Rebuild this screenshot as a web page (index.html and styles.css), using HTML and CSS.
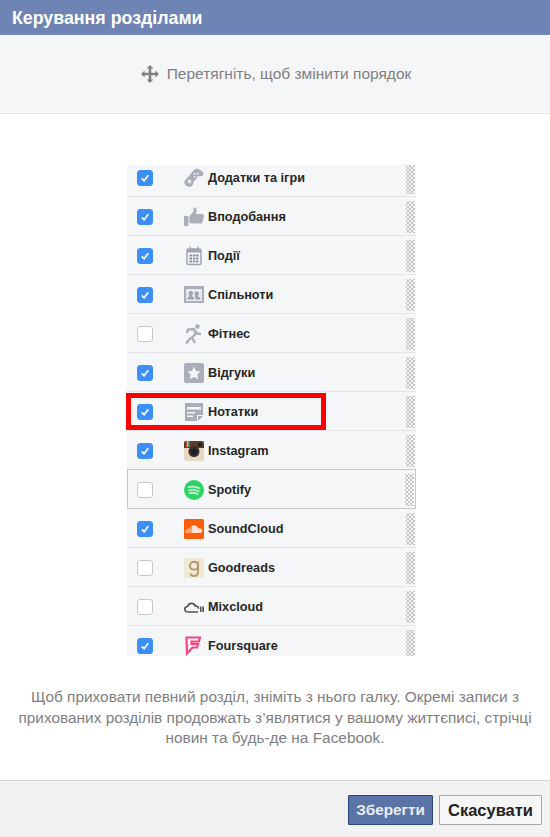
FILE: index.html
```html
<!DOCTYPE html>
<html lang="uk">
<head>
    <meta charset="UTF-8">
    <title>Керування розділами</title>
    <link rel="stylesheet" href="styles.css">
</head>
<body>
    <header class="title-bar">Керування розділами</header>

    <div class="hint-bar">
        <svg class="move-icon" width="18" height="18" viewBox="0 0 18 18">
            <path fill="#808080" d="M9 0l3.4 3.6h-2.1v4.100h4.100V5.600L18 9l-3.600 3.400v-2.100h-4.100v4.100h2.100L9 18l-3.400-3.600h2.100v-4.100H3.600v2.100L0 9l3.600-3.400v2.100h4.100V3.600H5.600z"/>
        </svg>
        Перетягніть, щоб змінити порядок
    </div>

    <main class="content">
        <div class="section-list">
            <div class="section-clip">
                <div class="section-rows">
                    <div class="row">
                        <span class="check on"><svg viewBox="0 0 15 15"><path d="M4 8l2.500 2.500L11 4.500"/></svg></span>
                        <svg class="icon" viewBox="0 0 20 20">
                            <path fill="#a9aeb8" d="M.5 13L9.500 2.500c1.200-1.500 3-2 4.500-1.500 2.500.8 5 2.500 5.500 4.500.2 1-.3 1.800-1 2.300l-4 .7-4.500 4.500-1 3.500c-.5 1.500-2 2.300-3.500 2.300-2.500 0-6-2.800-5-6.300z"/>
                            <path stroke="#f5f6f8" stroke-width="1.200" d="M4 12l3 3M7 12l-3 3"/>
                            <path fill="#f5f6f8" d="M10 5h1.500v1.500H10zM13 5h1.500v1.500H13zM10 8h1.500v1.500H10zM13 8h1.500v1.500H13z"/>
                        </svg>
                        <span class="name">Додатки та ігри</span>
                        <span class="grip"></span>
                    </div>
                    <div class="row">
                        <span class="check on"><svg viewBox="0 0 15 15"><path d="M4 8l2.500 2.500L11 4.500"/></svg></span>
                        <svg class="icon" viewBox="0 0 20 20">
                            <path fill="#a9aeb8" d="M0 9h4.500v10H0zM5.500 9l4-4.500V1c0-.8 2.500-1 3 1 .3 1.500-.3 3.500-.8 5H18.500c1.500 0 1.500 2 .8 2.500.8.800.5 2-.3 2.500.5 1 .2 2-.6 2.400.3 1-.2 2.100-1.400 2.100H8c-1 0-2.500-.5-2.500-1z"/>
                        </svg>
                        <span class="name">Вподобання</span>
                        <span class="grip"></span>
                    </div>
                    <div class="row">
                        <span class="check on"><svg viewBox="0 0 15 15"><path d="M4 8l2.500 2.500L11 4.500"/></svg></span>
                        <svg class="icon" viewBox="0 0 20 20">
                            <rect x="3" y="3" width="14" height="15.500" rx="1.500" fill="#f5f6f8" stroke="#a0a5b0" stroke-width="1.500"/>
                            <path fill="#a0a5b0" d="M3 3h14v3.500H3zM5.500 .5h1.200v3.500H5.500zM13.300 .5h1.200v3.500h-1.200z"/>
                            <path fill="#8a8f9b" d="M5.500 8.500h2.500v2H5.500zM8.800 8.500h2.500v2H8.800zM12 8.500h2.500v2H12zM5.500 11.500h2.500v2H5.500zM8.800 11.500h2.500v2H8.800zM12 11.500h2.500v2H12zM5.500 14.500h2.500v2H5.500zM8.800 14.500h2.500v2H8.800zM12 14.500h2.500v2H12z"/>
                        </svg>
                        <span class="name">Події</span>
                        <span class="grip"></span>
                    </div>
                    <div class="row">
                        <span class="check on"><svg viewBox="0 0 15 15"><path d="M4 8l2.500 2.500L11 4.500"/></svg></span>
                        <svg class="icon" viewBox="0 0 20 20">
                            <rect y="1" width="20" height="17" fill="#a9aeb8"/>
                            <rect x="2" y="4" width="16" height="12" fill="#e9ebef"/>
                            <path fill="#a0a5b0" d="M7 6c1.300 0 2 1 2 2.300 0 1-.5 1.700-1 2.200v.8l2 1.200v2H3.500v-2l2-1.200v-.8c-.5-.5-1-1.200-1-2.200C4.500 7 5.500 6 7 6zM13 6.500c1.200 0 1.900 1 1.900 2.100 0 1-.4 1.600-.9 2.100v.7l2.300 1.100v2h-5v-2.800l-1-.8c.3-.3.600-.5.900-.6v-.5c-.4-.4-.8-1-.8-1.700C10.400 7.500 11.500 6.500 13 6.500z"/>
                        </svg>
                        <span class="name">Спільноти</span>
                        <span class="grip"></span>
                    </div>
                    <div class="row">
                        <span class="check"></span>
                        <svg class="icon" viewBox="0 0 20 20">
                            <circle cx="13.500" cy="2.500" r="2.200" fill="#a9aeb8"/>
                            <path fill="none" stroke="#a9aeb8" stroke-width="2.300" d="M3 9l1-3.500 6-.500 1.500 5-3.500 3.500 3 5.500M9 13l-3 1.500L2 19.500M11 6.500l2 3 4 .5"/>
                        </svg>
                        <span class="name">Фітнес</span>
                        <span class="grip"></span>
                    </div>
                    <div class="row">
                        <span class="check on"><svg viewBox="0 0 15 15"><path d="M4 8l2.500 2.500L11 4.500"/></svg></span>
                        <svg class="icon" viewBox="0 0 20 20">
                            <rect width="20" height="20" rx="2" fill="#a9aeb8"/>
                            <path fill="#f5f6f8" d="M10 3.500l2 4.500 4.800.4-3.600 3.200 1.100 4.800L10 13.800 5.700 16.400l1.100-4.800L3.200 8.400 8 8z"/>
                        </svg>
                        <span class="name">Відгуки</span>
                        <span class="grip"></span>
                    </div>
                    <div class="row">
                        <span class="check on"><svg viewBox="0 0 15 15"><path d="M4 8l2.500 2.500L11 4.500"/></svg></span>
                        <svg class="icon" viewBox="0 0 20 20">
                            <path fill="#a9aeb8" d="M1 1h18v12h-6v6H1z"/>
                            <path fill="#f5f6f8" d="M3 5h14v2.500H3zM3 10h8v1.500H3zM3 13.500h6V15H3z"/>
                            <path fill="#a9aeb8" d="M14 14h5l-5 5z"/>
                        </svg>
                        <span class="name">Нотатки</span>
                        <span class="grip"></span>
                    </div>
                    <div class="row">
                        <span class="check on"><svg viewBox="0 0 15 15"><path d="M4 8l2.500 2.500L11 4.500"/></svg></span>
                        <svg class="icon" viewBox="0 0 20 20">
                            <rect width="20" height="20" rx="2" fill="#e6d8c3"/>
                            <path fill="#5a3d2b" d="M0 2a2 2 0 0 1 2-2h16a2 2 0 0 1 2 2v5H0z"/>
                            <path fill="#d9483b" d="M2 0h1v6H2z"/>
                            <path fill="#e8b33f" d="M3 0h1v6H3z"/>
                            <path fill="#5aa469" d="M4 0h1v6H4z"/>
                            <path fill="#3f74b5" d="M5 0h1v6H5z"/>
                            <rect x="14" y="2" width="4" height="3.500" fill="#222"/>
                            <circle cx="10" cy="10.500" r="5.500" fill="#3a2c26"/>
                            <circle cx="10" cy="10.500" r="3" fill="#16212c"/>
                        </svg>
                        <span class="name">Instagram</span>
                        <span class="grip"></span>
                    </div>
                    <div class="row row-active">
                        <span class="check"></span>
                        <svg class="icon" viewBox="0 0 20 20">
                            <circle cx="10" cy="10" r="10" fill="#2ed463"/>
                            <path fill="none" stroke="#c6f5d5" stroke-width="1.700" stroke-linecap="round" d="M4.500 7.200c3.500-1 7.500-.7 11 1M5 10.300c3-.8 6.500-.5 9.500 1M5.600 13.200c2.500-.6 5.500-.4 8 .8"/>
                        </svg>
                        <span class="name">Spotify</span>
                        <span class="grip"></span>
                    </div>
                    <div class="row">
                        <span class="check on"><svg viewBox="0 0 15 15"><path d="M4 8l2.500 2.500L11 4.500"/></svg></span>
                        <svg class="icon" viewBox="0 0 20 20">
                            <rect width="20" height="20" rx="1.500" fill="#fb5c0a"/>
                            <path fill="#ffe3d2" d="M1.500 14v-3l1-.5V14zM3.500 14V9.500h1V14zM5.500 14V8.500h1V14zM7.500 14V6.800c3-1.300 5.800-.2 6.500 2.500 2.200-.5 4.200.5 4.200 2.400S16.500 14 15.500 14z"/>
                        </svg>
                        <span class="name">SoundCloud</span>
                        <span class="grip"></span>
                    </div>
                    <div class="row">
                        <span class="check"></span>
                        <svg class="icon" viewBox="0 0 20 20">
                            <rect width="20" height="20" fill="#f1ead8"/>
                            <circle cx="10" cy="7.800" r="4" fill="none" stroke="#b59a6c" stroke-width="2"/>
                            <path fill="none" stroke="#b59a6c" stroke-width="2" d="M14 3.500v10c0 3.500-2 4.500-4 4.500-1.800 0-3.300-.8-3.800-2.500"/>
                        </svg>
                        <span class="name">Goodreads</span>
                        <span class="grip"></span>
                    </div>
                    <div class="row">
                        <span class="check"></span>
                        <svg class="icon" viewBox="0 0 20 20">
                            <path fill="none" stroke="#555" stroke-width="1.700" d="M14 15H4c-2 0-3.200-1.200-3.200-2.800 0-1.500 1.200-2.700 2.700-2.700C4 7.500 5.500 6.300 7.500 6.300c1.800 0 3.200 1.100 3.700 2.700 1.800-.3 3.300 1 3.300 2.800"/>
                            <path fill="#555" d="M16 9.500h1.500V15H16zM18.300 9.500H20V15h-1.700z"/>
                        </svg>
                        <span class="name">Mixcloud</span>
                        <span class="grip"></span>
                    </div>
                    <div class="row">
                        <span class="check on"><svg viewBox="0 0 15 15"><path d="M4 8l2.500 2.500L11 4.500"/></svg></span>
                        <svg class="icon" viewBox="0 0 20 20">
                            <path fill="none" stroke="#f2477f" stroke-width="2.200" d="M2.500 1.500h13.500l-1 4H7.500v2.500h6.500l-1 3.500H8.500L3 17.500z"/>
                        </svg>
                        <span class="name">Foursquare</span>
                        <span class="grip"></span>
                    </div>
                </div>
            </div>
            <div class="red-box"></div>
        </div>

        <p class="note">Щоб приховати певний розділ, зніміть з нього галку. Окремі записи з прихованих розділів продовжать з’являтися у вашому життєписі, стрічці новин та будь-де на Facebook.</p>
    </main>

    <footer class="actions">
        <button class="btn btn-save">Зберегти</button>
        <button class="btn btn-cancel">Скасувати</button>
    </footer>
</body>
</html>
```

FILE: styles.css
```css
body {
    margin: 0;
    height: 837px;
    display: flex;
    flex-direction: column;
    overflow: hidden;
    font-family: "Liberation Sans", Arial, sans-serif;
    background-color: #ffffff;
}

.title-bar {
    height: 35px;
    padding-left: 12px;
    line-height: 36px;
    font-size: 17.800px;
    font-weight: bold;
    color: #ffffff;
    background-color: #6d84b4;
}

.hint-bar {
    height: 78px;
    display: flex;
    align-items: center;
    justify-content: center;
    gap: 8px;
    padding-left: 2px;
    font-size: 15.500px;
    color: #7f7f7f;
    background-color: #f5f6f8;
    border-bottom: 1px solid #e3e3e3;
}

.move-icon {
    flex: none;
}

.content {
    flex: 1;
    padding-top: 51px;
}

.section-list {
    position: relative;
    width: 289px;
    height: 491px;
    margin-left: 127px;
}

.section-clip {
    height: 491px;
    overflow: hidden;
    background-color: #f5f6f8;
}

.section-rows {
    margin-top: -7px;
}

.row {
    height: 37px;
    padding-top: 1px;
    display: flex;
    align-items: center;
    padding-left: 10px;
    border-bottom: 1px solid #e4e5e8;
}

.row-active {
    height: 37px;
    margin-top: -1px;
    padding-left: 9px;
    border: 1px solid #c8c8c8;
}

.check {
    width: 14px;
    height: 14px;
    flex: none;
    margin-right: 31px;
    background-color: #ffffff;
    border: 1px solid #c6c8cc;
    border-radius: 3px;
}

.check.on {
    background-color: #3b8ff6;
    border-color: #3b8ff6;
}

.check svg {
    display: block;
    width: 14px;
    height: 14px;
    fill: none;
    stroke: #ffffff;
    stroke-width: 1.800;
}

.icon {
    width: 20px;
    height: 20px;
    flex: none;
    margin-right: 4px;
}

.name {
    flex: 1;
    font-size: 12.700px;
    font-weight: bold;
    color: #262626;
}

.grip {
    width: 9px;
    height: 32px;
    flex: none;
    margin-right: 1px;
    background-image:
        radial-gradient(circle, #c4c4c4 1px, transparent 1.200px),
        radial-gradient(circle, #c4c4c4 1px, transparent 1.200px);
    background-size: 4px 4px;
    background-position: 0 0, 2px 2px;
}

.red-box {
    position: absolute;
    left: -1px;
    top: 228px;
    width: 190px;
    height: 27px;
    border: 5px solid #ff0000;
}

.note {
    margin: 31px 10px 0;
    font-size: 15.400px;
    line-height: 20.500px;
    text-align: center;
    color: #808080;
}

.actions {
    height: 57px;
    display: flex;
    justify-content: flex-end;
    align-items: flex-start;
    gap: 6px;
    padding: 14px 8px 0 0;
    box-sizing: border-box;
    background-color: #f2f2f2;
    border-top: 1px solid #d6d6d6;
}

.btn {
    height: 30px;
    padding: 0;
    font-family: inherit;
    font-weight: bold;
    border-radius: 1px;
}

.btn-save {
    width: 85px;
    font-size: 15.300px;
    color: #e8edf6;
    background-color: #5b74a8;
    border: 1px solid #29447e;
}

.btn-cancel {
    width: 103px;
    font-size: 16.500px;
    color: #222222;
    background-color: #f6f6f6;
    border: 1px solid #a8a8a8;
}
```
